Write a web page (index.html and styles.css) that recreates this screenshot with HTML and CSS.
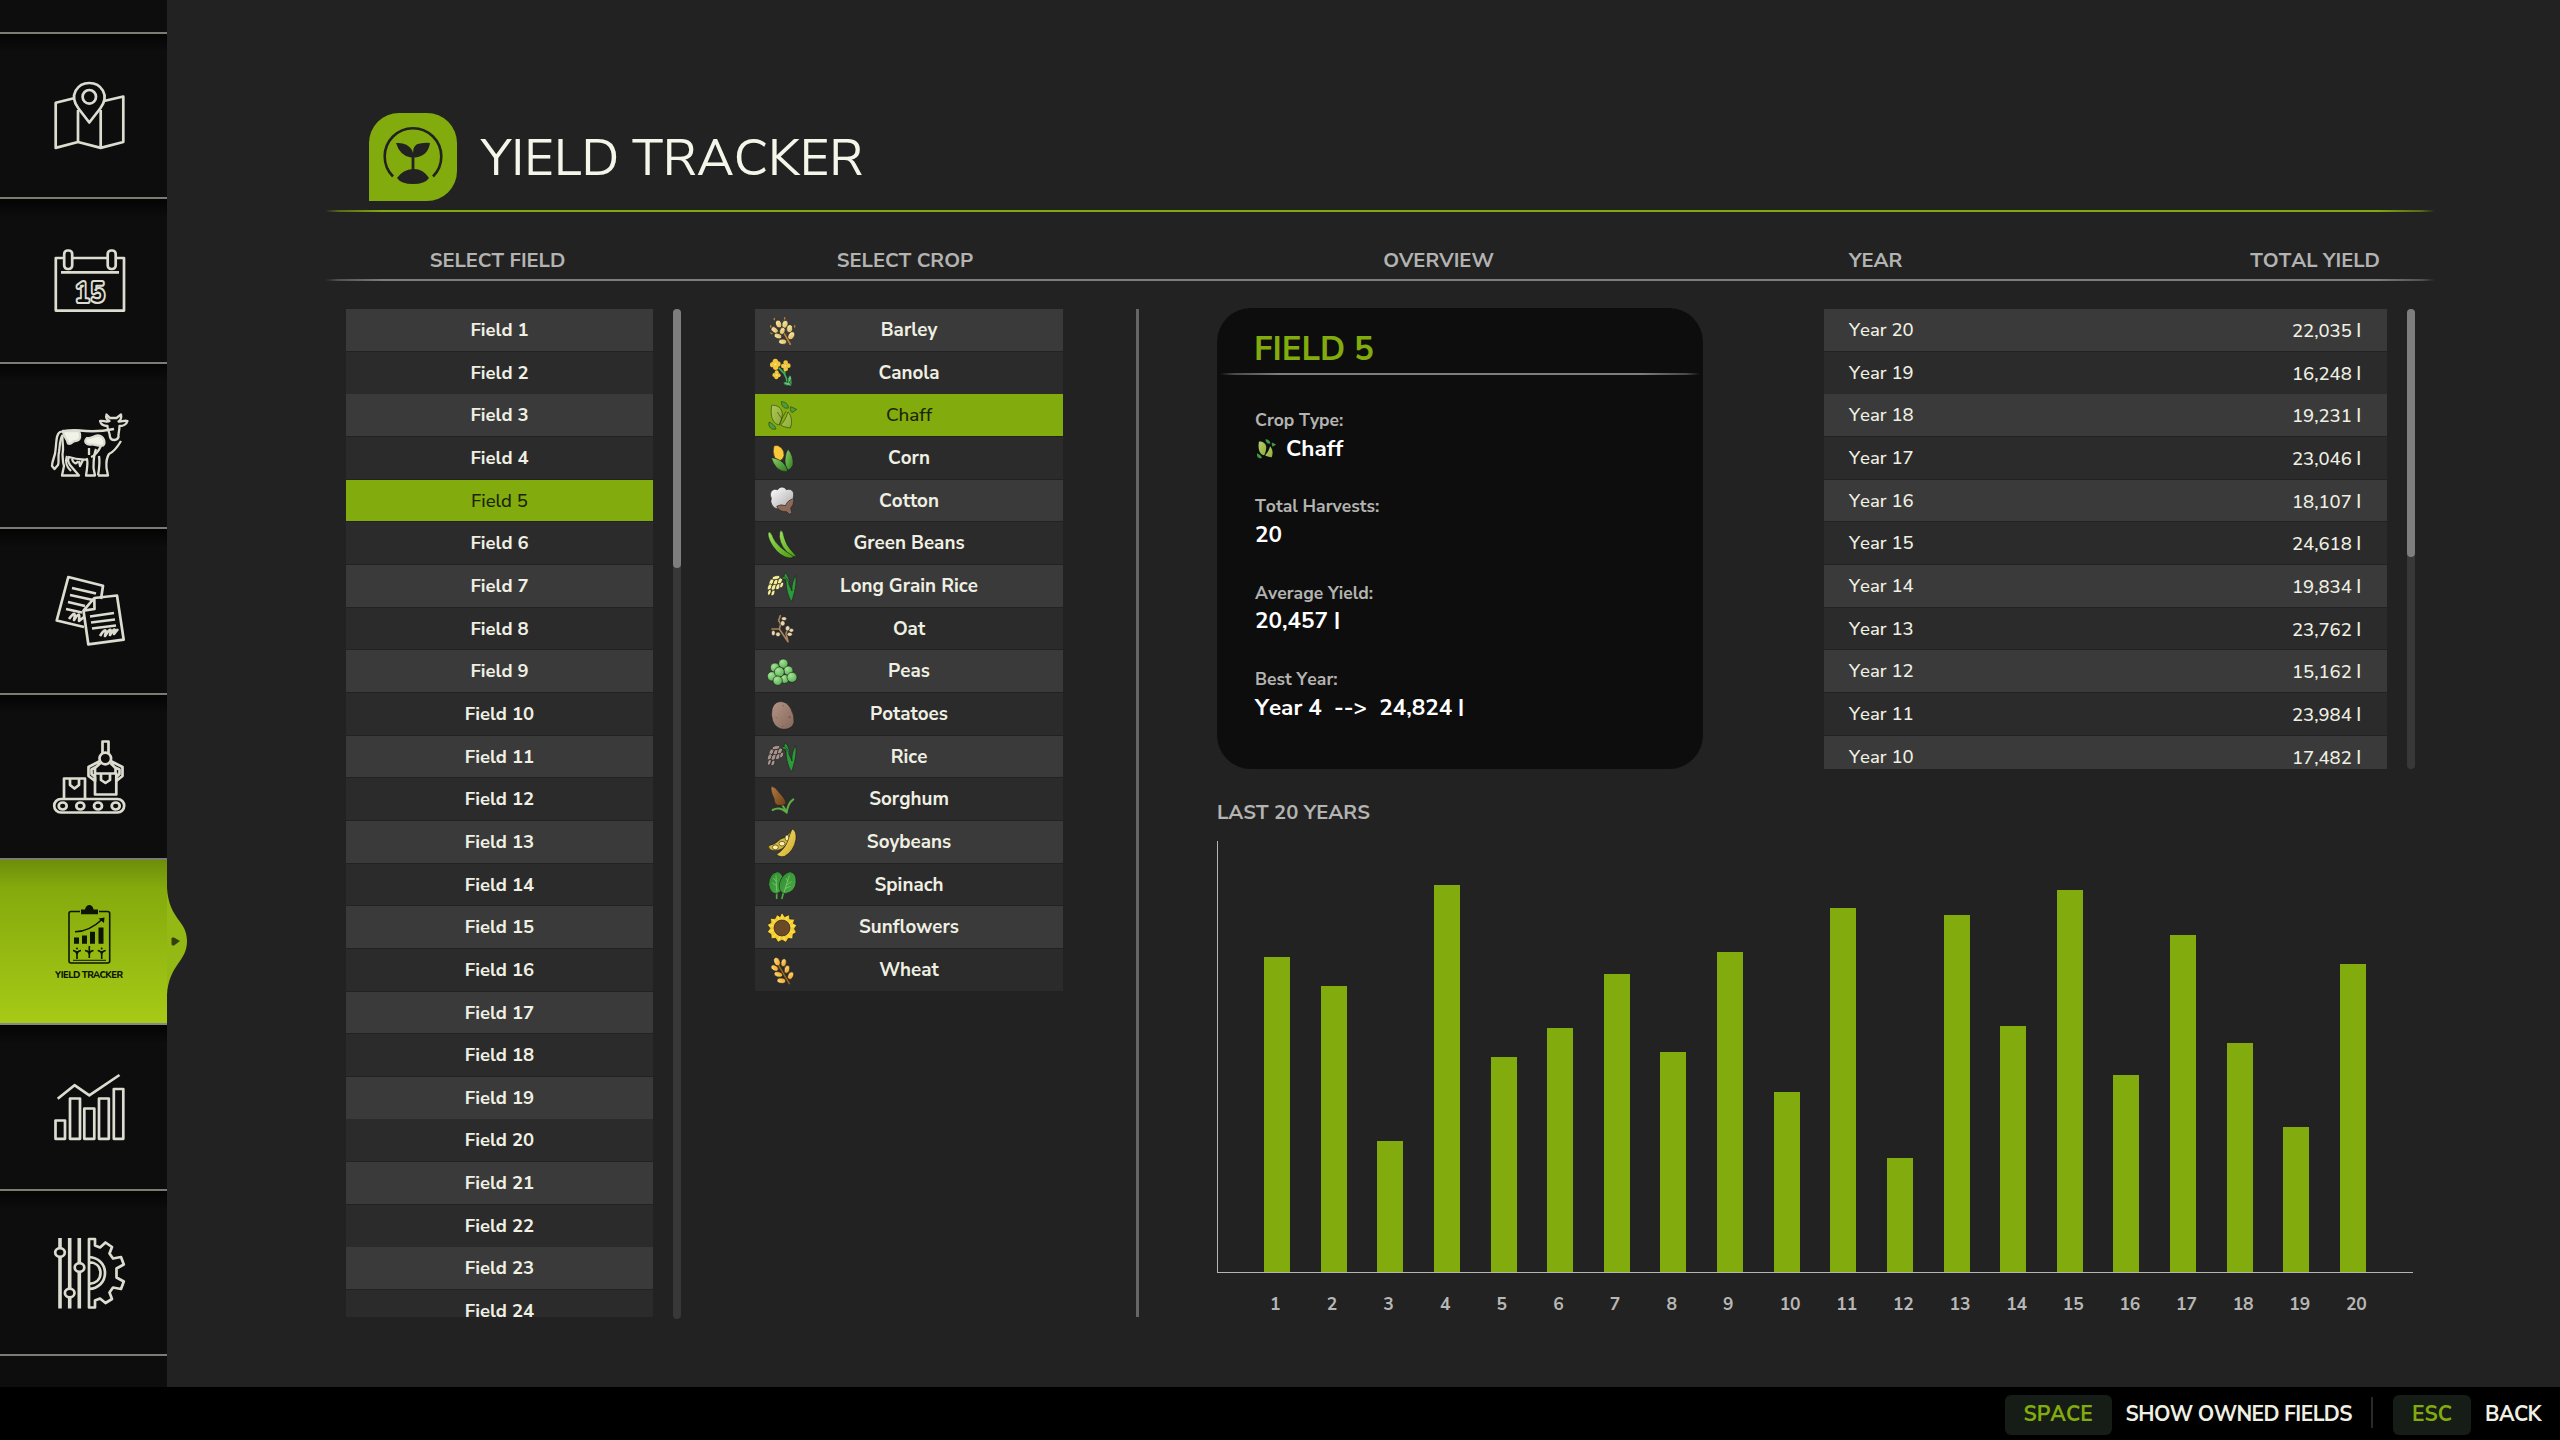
FILE: index.html
```html
<!DOCTYPE html>
<html lang="en">
<head>
<meta charset="utf-8">
<title>Yield Tracker</title>
<link rel="stylesheet" href="styles.css">
</head>
<body>
<svg class="defs" width="0" height="0">
  <defs>
    <linearGradient id="gBarley" x1="0" y1="0" x2="1" y2="1"><stop offset="0" stop-color="#fff3b8"/><stop offset="1" stop-color="#d9b25a"/></linearGradient>
    <linearGradient id="gWheat" x1="0" y1="0" x2="1" y2="1"><stop offset="0" stop-color="#ffe68a"/><stop offset="1" stop-color="#f0981a"/></linearGradient>
    <linearGradient id="gLeaf" x1="0" y1="0" x2="1" y2="1"><stop offset="0" stop-color="#8fd06a"/><stop offset="1" stop-color="#2c7a1f"/></linearGradient>
    <linearGradient id="gBean" x1="0" y1="0" x2="1" y2="1"><stop offset="0" stop-color="#9be05a"/><stop offset="1" stop-color="#4d9a14"/></linearGradient>
    <linearGradient id="gChaff" x1="0" y1="0" x2="1" y2="1"><stop offset="0" stop-color="#b9cf6a"/><stop offset="1" stop-color="#8fae3c"/></linearGradient>
    <linearGradient id="gPotato" x1="0" y1="0" x2="1" y2="1"><stop offset="0" stop-color="#b59587"/><stop offset="1" stop-color="#83675a"/></linearGradient>
    <linearGradient id="gSoy" x1="0" y1="0" x2="1" y2="1"><stop offset="0" stop-color="#f8e86a"/><stop offset="1" stop-color="#cfa62c"/></linearGradient>
    <linearGradient id="gCotton" x1="0" y1="0" x2="1" y2="1"><stop offset="0" stop-color="#ffffff"/><stop offset="1" stop-color="#a9a9a9"/></linearGradient>
    <linearGradient id="gSorghum" x1="0" y1="0" x2="1" y2="1"><stop offset="0" stop-color="#b07a45"/><stop offset="1" stop-color="#6f4014"/></linearGradient>
    <linearGradient id="gSpinach" x1="0" y1="0" x2="1" y2="1"><stop offset="0" stop-color="#2f8a30"/><stop offset="1" stop-color="#4cae45"/></linearGradient>
    <radialGradient id="gPea" cx=".35" cy=".3" r=".8"><stop offset="0" stop-color="#a8e39a"/><stop offset="1" stop-color="#4fae49"/></radialGradient>
    <symbol id="chaff" viewBox="0 0 96 96">
      <path d="M17 16C34 14 49 25 49 42C48 56 45 66 40 75C24 73 11 56 17 16Z" fill="url(#gChaff)"/>
      <path d="M66 36C77 48 80 66 73 84C61 83 50 79 44 75C54 66 61 53 66 36Z" fill="url(#gChaff)"/>
      <path d="M46 5C58 5 67 12 67 24C56 27 46 20 46 5Z" fill="#3f9a44"/>
      <path d="M74 20L92 28L78 38C73 33 72 26 74 20Z" fill="#3f9a44"/>
      <path d="M9 66C20 71 28 78 30 87C17 91 6 82 9 66Z" fill="#3f9a44"/>
      <path d="M34 36L47 56L60 34M47 56L40 73" fill="none"/>
    </symbol>
    <symbol id="rice" viewBox="0 0 96 96">
      <g fill="currentColor">
        <ellipse cx="30" cy="20" rx="12" ry="6" transform="rotate(-12 30 20)"/><ellipse cx="16" cy="33" rx="6" ry="10" transform="rotate(28 16 33)"/>
        <ellipse cx="29" cy="34" rx="6" ry="10" transform="rotate(28 29 34)"/><ellipse cx="42" cy="30" rx="6" ry="10" transform="rotate(28 42 30)"/>
        <ellipse cx="11" cy="48" rx="6" ry="10" transform="rotate(22 11 48)"/><ellipse cx="23" cy="49" rx="6" ry="10" transform="rotate(28 23 49)"/>
        <ellipse cx="36" cy="47" rx="6" ry="10" transform="rotate(28 36 47)"/><ellipse cx="47" cy="42" rx="5" ry="9" transform="rotate(22 47 42)"/>
        <ellipse cx="10" cy="64" rx="5" ry="9" transform="rotate(18 10 64)"/><ellipse cx="21" cy="66" rx="5" ry="9" transform="rotate(22 21 66)"/>
      </g>
      <path d="M46 16C58 14 66 24 69 40L78 60C76 44 82 24 89 14C93 40 85 66 77 92C66 78 60 52 60 26L46 22C58 14 54 12 58 5C66 14 70 24 72 40" fill="#2d9a3a"/>
    </symbol>
  </defs>
</svg>

<div class="screen">
  <nav class="sidebar">
    <div class="tab tab-edge"></div>
    <a class="tab"><svg class="tab-icon" viewBox="0 0 167 165"><path d="M75 64L55.7 68.8V113.9L78 108L100.7 113.9L123.3 108V62.5L104 67"/><path d="M78 76V108M100.7 76V113.9"/><path d="M89.3 88.5L78.5 74.5C68 61 78 49 89.3 49S110.600 61 100.200 74.500Z"/><ellipse cx="89.300" cy="62.800" rx="6.700" ry="6.800"/></svg></a>
    <a class="tab"><svg class="tab-icon" viewBox="0 0 167 165"><path d="M64 59H55.800V111.600H124V59H116.500M72.500 59H107"/><path d="M61 73.400H119"/><rect x="64.200" y="51.500" width="8" height="18.500" rx="3.500"/><rect x="107.700" y="51.500" width="8" height="18.500" rx="3.500"/><text class="tab-day" x="90" y="103.500" text-anchor="middle" textLength="31" lengthAdjust="spacingAndGlyphs">15</text></svg></a>
    <a class="tab"><svg class="tab-icon cow" viewBox="0 0 167 165"><path d="M114 65C104 67 92 68 80 66.500C70 65.500 64 67 60 68C56 70 56.500 78 55.500 86C55.500 92 52 96 52 102L54.500 105L58 101C59.500 97 57.500 94 59 88C60 82 59.500 76 62.500 71"/><path d="M62.500 71C62 78 64 84 62.500 90C63 96 62.500 98 64 102L62 111.500H79L70 101C68 98 67 96 69 93C80 96 86 96 87 95C88 99 87.500 103 86 111.500H95L93.500 104C93.500 98 94 90 96 85"/><path d="M67 92C65 97 66.500 103 71 107M72 95C73 99 76 101 78 97M79 97L80 102L83 96"/><path d="M98 111.500H108L106.500 104C106 98 107 93 109 90C114 88 118 82 121 77M99 92C100 98 99.500 103 98 111.500M89 84V91M101 82C98 88 94 92 91 93"/><path d="M100 57C106 56 106 59 109.500 57C106 55 106 52 106.500 50.500L110 54H116.500L121 50.500C121.500 53 121 56 118.500 57.500C122 58 124 56 127.500 57C126 62 122 62 119.500 62C119.500 67 118 70 118.500 73C117 77 111 77 110 73C110 68 107 66 107.500 62C104 62 101 61 100 57Z"/><path class="patch" d="M63 67L79 67C81 71 81 77 75 77C72 77 72 81 68 79.500C67 74 63 73 63 67ZM87 74C91 75 93 72 98 71.500C104 72 106 79 103 81.500C99 83 95 80 91 80.500C87 81 83 78 87 74Z"/></svg></a>
    <a class="tab"><svg class="tab-icon" viewBox="0 0 167 165"><path d="M101 70L103 56.700L68.300 48L56.700 91.500L84 98"/><path d="M94.300 69L117 66.500L123.700 110.700L88.300 115.300L83.500 81.700Z"/><path d="M83.500 81.700L94.500 80L94.300 69M72 59L96 64.500M70 66L93 71M68 73L85 77M66 80L82 83.500"/><path d="M69 90C74 83 76 83 74 91C79 83 80 84 79 92L84 88"/><path d="M90 87.500L114 84M91 93.500L115 90.500M92 99.500L116 96.500"/><path d="M100 107C105 99 107 100 105 107C110 99 112 99 110 106C114 99 116 99 114 105L118 100"/></svg></a>
    <a class="tab"><svg class="tab-icon" viewBox="0 0 167 165"><rect x="54.200" y="104" width="70" height="13.500" rx="6.700"/><ellipse cx="62.700" cy="111" rx="4" ry="3.500"/><ellipse cx="80.300" cy="111" rx="4" ry="3.500"/><ellipse cx="98" cy="111" rx="4" ry="3.500"/><ellipse cx="115.700" cy="111" rx="4" ry="3.500"/><path d="M64 104V83.500H85V104M70 84V90L74.500 93.500L79 90V84"/><rect x="95" y="78.500" width="21.300" height="21"/><path d="M101 79V85L105.500 88L110 85V79M102.500 58V46.500H108.500V58"/><circle cx="105.300" cy="63.500" r="5.800"/><path d="M100 66L88.500 72V81L95 86V82L91.500 79V74.500L96 72M110.700 66L122.500 72V81L116.300 86V82L119.500 79V74.500L114 72M100.500 68L95 73V78M110.500 68L115.500 73V78"/></svg></a>
    <a class="tab tab-active">
      <svg class="tab-icon clipboard" viewBox="0 0 167 165"><path d="M80 51.500H71Q69 51.500 69 53.500V101Q69 103 71 103H107.500Q109.700 103 109.700 101V53.500Q109.700 51.500 107.500 51.500H99"/><path class="ink" d="M81 54.300V49.500H85Q86 45 89.300 45T93.600 49.500H98V54.300ZM74 83.700V77.500H79V83.700ZM82 83.700V75.500H87V83.700ZM90 83.700V71.700H95V83.700ZM98.500 83.700V67.500H103.500V83.700ZM104.500 57.500L104 63L98.500 58.500Z"/><path d="M75 71.800C86 71.800 94 67 102 59.500"/><path d="M77 99V91M73 90.500Q77 91 77 95Q77 91 81 90.500M89.300 98V88M85 90.500Q89.300 91 89.300 95Q89.300 91 93.500 90.500M101.700 99V91M97.700 90.500Q101.700 91 101.700 95Q101.700 91 105.700 90.500"/><path class="soil" d="M73 100.300H106"/><circle class="ink" cx="77" cy="88.500" r="1"/><circle class="ink" cx="89.300" cy="87" r="1"/><circle class="ink" cx="101.700" cy="88.500" r="1"/><text class="tab-caption" x="55" y="117.800" textLength="68" lengthAdjust="spacing">YIELD TRACKER</text></svg>
      <svg class="tab-bump" viewBox="0 0 20 107"><path d="M0 0C2 32 20 32 20 53S2 76 0 107Z"/><path class="bump-arrow" d="M4.500 50.500Q4.500 49 7 49.500L13 53L7 57.500Q4.500 58 4.500 56Z"/></svg>
    </a>
    <a class="tab"><svg class="tab-icon" viewBox="0 0 167 165"><path d="M55.500 95.500H65V113.800H55.500ZM70 73.500H80V113.800H70ZM84.300 83.500H94.300V113.800H84.300ZM99 73.500H108.800V113.800H99ZM113.800 64H123.300V113.800H113.800ZM57.700 73.800L74.500 60.200L89.300 70.400L119.500 50"/></svg></a>
    <a class="tab"><svg class="tab-icon" viewBox="0 0 167 165"><path class="thick" d="M60 47V57M60 66V117.500M69.700 47V97.500M69.700 107V117.500M79.300 47V72M79.300 81V117.500"/><ellipse cx="60" cy="61.500" rx="4.800" ry="4.300"/><ellipse cx="69.700" cy="102" rx="4.800" ry="4.300"/><ellipse cx="79.500" cy="76.500" rx="4.800" ry="4.300"/><path d="M89 48H95V54.500L100 56.500L105.500 51.500L112 56L109.500 62.500L113 67.500L121 66L123.800 73.500L116.500 77.500V86.500L123.800 90.500L121 98L113 96.500L109.500 101.500L112 108L105.500 112L100 107.500L95 109.500V116.500H89ZM89 66C98 66.500 105 73 105 82S98 97.500 89 98M89 71C95 71.500 100.500 75 100.500 82S95 92.500 89 93"/></svg></a>
    <div class="tab tab-edge"></div>
  </nav>

  <main class="page">
    <header class="page-header">
      <svg class="page-badge" viewBox="0 0 88 88"><path d="M30 0H58A30 30 0 0 1 88 30V58A30 30 0 0 1 58 88H0V30A30 30 0 0 1 30 0Z" fill="#82ab0d"/><path d="M24 63.500A28.300 28.300 0 1 1 64 63.500" fill="none" stroke="#222" stroke-width="2.600"/><path d="M44 44V58" stroke="#222" stroke-width="2.800"/><path d="M27 30Q38 29 43 37Q44 40 44 40Q44 31 51 30.500Q56 29.500 61 30Q59 43 46 44.500H42Q31 43 27 30ZM28 65Q34 56.500 44 56T60 65Q56 71 44 71T28 65Z" fill="#222"/></svg>
      <h1 class="page-title">YIELD TRACKER</h1>
    </header>
    <div class="rule rule-green"></div>
    <div class="column-heads">
      <span class="head-fields">SELECT FIELD</span><span class="head-crops">SELECT CROP</span><span class="head-overview">OVERVIEW</span><span class="head-year">YEAR</span><span class="head-total">TOTAL YIELD</span>
    </div>
    <div class="rule"></div>

    <div class="content">
      <section class="scroller">
        <ul class="list field-list">
          <li>Field 1</li><li>Field 2</li><li>Field 3</li><li>Field 4</li><li class="selected">Field 5</li><li>Field 6</li><li>Field 7</li><li>Field 8</li><li>Field 9</li><li>Field 10</li><li>Field 11</li><li>Field 12</li><li>Field 13</li><li>Field 14</li><li>Field 15</li><li>Field 16</li><li>Field 17</li><li>Field 18</li><li>Field 19</li><li>Field 20</li><li>Field 21</li><li>Field 22</li><li>Field 23</li><li>Field 24</li>
        </ul>
        <div class="scrollbar"><div class="thumb thumb-fields"></div></div>
      </section>

      <ul class="list crop-list">
        <li><svg class="crop" viewBox="0 0 96 96"><path class="line" d="M43 34L73 88M25 14V10M56 12V8M14 36V32M18 56L14 54M86 36V32" stroke="#b9812e" stroke-width="4"/><g fill="url(#gBarley)"><ellipse cx="38" cy="27" rx="9" ry="12" transform="rotate(-20 38 27)"/><ellipse cx="57" cy="28" rx="9" ry="12" transform="rotate(15 57 28)"/><ellipse cx="26" cy="45" rx="8" ry="12" transform="rotate(-50 26 45)"/><ellipse cx="49" cy="48" rx="8" ry="11" transform="rotate(20 49 48)"/><ellipse cx="71" cy="41" rx="9" ry="12" transform="rotate(10 71 41)"/><ellipse cx="36" cy="63" rx="8" ry="12" transform="rotate(-70 36 63)"/><ellipse cx="76" cy="62" rx="9" ry="13" transform="rotate(30 76 62)"/><ellipse cx="50" cy="80" rx="8" ry="12" transform="rotate(-85 50 80)"/></g><path class="line" d="M56 58L73 88" stroke="#b9812e" stroke-width="4"/></svg><span>Barley</span></li>
        <li><svg class="crop" viewBox="0 0 96 96"><path class="line" d="M40 34L55 50L62 66V84M56 36V50M74 66V82" stroke="#3faf5d" stroke-width="5"/><path d="M72 54Q82 64 70 76L78 88L60 84Q50 82 54 74L66 76Q62 64 72 54Z" fill="#5bc873"/><g fill="#f2c73c" stroke="none"><circle cx="28" cy="13" r="8"/><circle cx="20" cy="23" r="8"/><circle cx="36" cy="21" r="8"/><circle cx="29" cy="31" r="8"/><circle cx="59" cy="17" r="7"/><circle cx="52" cy="27" r="7"/><circle cx="67" cy="26" r="7"/><circle cx="59" cy="36" r="7"/><circle cx="32" cy="46" r="6"/><circle cx="25" cy="54" r="6"/><circle cx="38" cy="55" r="6"/><circle cx="31" cy="61" r="6"/></g><g fill="#fbe58c" stroke="none"><circle cx="28" cy="22" r="3"/><circle cx="59" cy="27" r="3"/><circle cx="32" cy="54" r="3"/></g></svg><span>Canola</span></li>
        <li class="selected"><svg class="crop crop-faded"><use href="#chaff"/></svg><span>Chaff</span></li>
        <li><svg class="crop" viewBox="0 0 96 96"><path d="M24 8Q34 4 46 14Q56 24 54 38Q52 50 40 54L26 44Q18 26 24 8Z" fill="#fbc83a"/><path d="M66 18Q84 40 81 66Q76 78 66 82Q54 66 58 42Q60 28 66 18Z" fill="url(#gLeaf)"/><path d="M16 44Q38 46 52 60Q64 72 66 86Q46 88 32 74Q20 60 16 44Z" fill="url(#gLeaf)"/></svg><span>Corn</span></li>
        <li><svg class="crop" viewBox="0 0 96 96"><path d="M48 6Q57 6 61 14Q76 10 82 22Q84 30 82 36Q84 44 80 52L38 72Q24 72 18 60Q12 50 16 40Q10 30 16 18Q24 10 35 14Q40 6 48 6Z" fill="url(#gCotton)"/><path d="M84 40Q84 60 74 70L78 84L70 88L62 80Q40 82 32 64Q44 56 58 62Q64 46 84 40Z" fill="#8d6a58"/></svg><span>Cotton</span></li>
        <li><svg class="crop" viewBox="0 0 96 96"><path d="M44 6Q52 10 54 26Q60 52 80 72L92 86L76 84Q44 60 40 26Q40 12 44 6Z" fill="url(#gBean)"/><path d="M10 12Q18 16 22 30Q34 56 78 82Q88 90 70 90Q42 86 20 54Q6 32 6 18Q6 12 10 12Z" fill="url(#gBean)"/></svg><span>Green Beans</span></li>
        <li><svg class="crop rice-long"><use href="#rice"/></svg><span>Long Grain Rice</span></li>
        <li><svg class="crop" viewBox="0 0 96 96"><path class="line" d="M43 8L38 22L44 34L40 48L66 86M40 48L18 48M66 86L60 62L66 42" stroke="#a8845c" stroke-width="5"/><g fill="#e8d5ae"><ellipse cx="54" cy="17" rx="8" ry="6"/><ellipse cx="50" cy="31" rx="7" ry="8"/><ellipse cx="65" cy="46" rx="7" ry="8"/><ellipse cx="76" cy="52" rx="7" ry="6"/><ellipse cx="22" cy="60" rx="6" ry="8"/><ellipse cx="36" cy="64" rx="7" ry="7"/><ellipse cx="71" cy="64" rx="8" ry="6"/></g></svg><span>Oat</span></li>
        <li><svg class="crop" viewBox="0 0 96 96"><g fill="url(#gPea)"><circle cx="27" cy="35" r="14"/><circle cx="52" cy="23" r="14"/><circle cx="67" cy="44" r="14"/><circle cx="18" cy="61" r="14"/><circle cx="56" cy="69" r="13"/><circle cx="40" cy="48" r="15"/><circle cx="78" cy="64" r="15"/><circle cx="35" cy="74" r="14"/></g></svg><span>Peas</span></li>
        <li><svg class="crop" viewBox="0 0 96 96"><path d="M40 8Q62 6 74 28Q86 50 84 70Q80 90 54 91Q30 90 20 66Q14 48 18 30Q24 10 40 8Z" fill="url(#gPotato)"/><path class="speck" d="M50 18L54 22M29 54L32 57M66 56L72 52M48 82L52 82M74 53L72 58"/></svg><span>Potatoes</span></li>
        <li><svg class="crop rice-brown"><use href="#rice"/></svg><span>Rice</span></li>
        <li><svg class="crop" viewBox="0 0 96 96"><path class="line" d="M42 52L62 84M82 46Q66 56 62 86Q42 66 20 78" stroke="#5fae45" stroke-width="6"/><path d="M16 6Q28 8 40 26Q60 46 60 58Q56 66 34 64Q24 58 24 44Q12 20 16 6Z" fill="url(#gSorghum)"/></svg><span>Sorghum</span></li>
        <li><svg class="crop" viewBox="0 0 96 96"><path d="M76 8Q66 30 44 36Q26 54 8 56Q6 66 18 70Q50 76 68 42Z" fill="#d9bb38"/><g fill="#fff0a0"><ellipse cx="28" cy="61" rx="9" ry="7"/><ellipse cx="48" cy="50" rx="9" ry="7"/><ellipse cx="63" cy="33" rx="6" ry="9"/></g><path d="M78 6Q92 10 90 36Q84 72 56 88Q40 92 32 82Q56 68 66 40Q72 20 78 6Z" fill="url(#gSoy)"/></svg><span>Soybeans</span></li>
        <li><svg class="crop" viewBox="0 0 96 96"><path class="line" d="M32 62V88M52 72L48 88" stroke="#4cae45" stroke-width="5"/><path d="M34 8Q50 12 54 36Q54 66 32 74Q12 74 8 46Q10 14 34 8Z" fill="url(#gSpinach)"/><path d="M72 8Q92 12 90 40Q88 68 58 74Q36 70 40 44Q48 14 72 8Z" fill="url(#gSpinach)"/><path class="line" d="M30 20L32 66M30 36L22 28M31 50L20 42M70 20L54 70M66 36L60 28M62 48L76 38M58 58L72 52" stroke="#8ed57c" stroke-width="2"/></svg><span>Spinach</span></li>
        <li><svg class="crop" viewBox="0 0 96 96"><path d="M48 2L56 14L70 8L71 21L86 22L82 34L92 40L85 50L91 61L81 67L80 81L67 79L60 91L48 84L36 91L29 79L16 80L15 67L4 60L12 49L4 38L15 32L13 19L27 20L33 8L42 14Z" fill="#f7cf2c"/><path d="M48 6V24M64 14L58 26M80 26L68 34M88 41L72 44M84 62L70 56M74 76L64 66M56 84L52 72M38 84L42 72M22 74L32 64M10 58L26 54M10 40L26 42M20 24L32 34M36 14L40 26" stroke="#fff0a0"/><circle cx="48" cy="48" r="24" fill="#6b4a2a"/></svg><span>Sunflowers</span></li>
        <li><svg class="crop" viewBox="0 0 96 96"><path class="line" d="M36 28L70 86" stroke="#9a651a" stroke-width="4.500"/><g fill="url(#gWheat)"><ellipse cx="33" cy="20" rx="9" ry="13" transform="rotate(-20 33 20)"/><ellipse cx="53" cy="23" rx="8" ry="12" transform="rotate(10 53 23)"/><ellipse cx="26" cy="39" rx="8" ry="12" transform="rotate(-60 26 39)"/><ellipse cx="63" cy="43" rx="8" ry="12" transform="rotate(15 63 43)"/><ellipse cx="37" cy="58" rx="8" ry="13" transform="rotate(-75 37 58)"/><ellipse cx="74" cy="62" rx="8" ry="12" transform="rotate(25 74 62)"/><ellipse cx="46" cy="77" rx="8" ry="13" transform="rotate(-85 46 77)"/></g></svg><span>Wheat</span></li>
      </ul>

      <div class="divider"></div>

      <section class="details">
        <div class="details-top">
          <article class="card">
            <h2 class="card-title">FIELD 5</h2>
            <div class="rule rule-card"></div>
            <dl class="facts">
              <div><dt>Crop Type:</dt><dd><svg class="fact-crop"><use href="#chaff"/></svg>Chaff</dd></div>
              <div><dt>Total Harvests:</dt><dd>20</dd></div>
              <div><dt>Average Yield:</dt><dd>20,457 <i>l</i></dd></div>
              <div><dt>Best Year:</dt><dd>Year 4&nbsp; --&gt;&nbsp; 24,824 <i>l</i></dd></div>
            </dl>
          </article>
          <div class="scroller">
            <ul class="list year-list">
              <li><span>Year 20</span><span>22,035 <i>l</i></span></li>
              <li><span>Year 19</span><span>16,248 <i>l</i></span></li>
              <li><span>Year 18</span><span>19,231 <i>l</i></span></li>
              <li><span>Year 17</span><span>23,046 <i>l</i></span></li>
              <li><span>Year 16</span><span>18,107 <i>l</i></span></li>
              <li><span>Year 15</span><span>24,618 <i>l</i></span></li>
              <li><span>Year 14</span><span>19,834 <i>l</i></span></li>
              <li><span>Year 13</span><span>23,762 <i>l</i></span></li>
              <li><span>Year 12</span><span>15,162 <i>l</i></span></li>
              <li><span>Year 11</span><span>23,984 <i>l</i></span></li>
              <li><span>Year 10</span><span>17,482 <i>l</i></span></li>
            </ul>
            <div class="scrollbar"><div class="thumb thumb-years"></div></div>
          </div>
        </div>

        <h3 class="chart-title">LAST 20 YEARS</h3>
        <div class="plot">
          <div class="bar" style="height:315px"></div><div class="bar" style="height:286px"></div><div class="bar" style="height:131px"></div><div class="bar" style="height:387px"></div><div class="bar" style="height:215px"></div><div class="bar" style="height:244px"></div><div class="bar" style="height:298px"></div><div class="bar" style="height:220px"></div><div class="bar" style="height:320px"></div><div class="bar" style="height:180px"></div><div class="bar" style="height:364px"></div><div class="bar" style="height:114px"></div><div class="bar" style="height:357px"></div><div class="bar" style="height:246px"></div><div class="bar" style="height:382px"></div><div class="bar" style="height:197px"></div><div class="bar" style="height:337px"></div><div class="bar" style="height:229px"></div><div class="bar" style="height:145px"></div><div class="bar" style="height:308px"></div>
        </div>
        <div class="ticks"><span>1</span><span>2</span><span>3</span><span>4</span><span>5</span><span>6</span><span>7</span><span>8</span><span>9</span><span>10</span><span>11</span><span>12</span><span>13</span><span>14</span><span>15</span><span>16</span><span>17</span><span>18</span><span>19</span><span>20</span></div>
      </section>
    </div>
  </main>
</div>

<footer class="actions">
  <kbd class="key key-space">SPACE</kbd><span class="action">SHOW OWNED FIELDS</span>
  <span class="separator"></span>
  <kbd class="key key-esc">ESC</kbd><span class="action">BACK</span>
</footer>
</body>
</html>
```
FILE: styles.css
```css
* { box-sizing: border-box; }

body {
  margin: 0;
  width: 2560px;
  height: 1440px;
  overflow: hidden;
  display: flex;
  flex-direction: column;
  background: #222;
  color: #eff0e3;
  font-family: "Nunito Sans", Nunito, Lato, "Open Sans", sans-serif;
  font-kerning: none;
}

h1, h2, h3, ul, dl, dd { margin: 0; padding: 0; }

/* Litre unit: a plain straight stroke */
i { font-style: normal; font-family: Lato, sans-serif; }

.defs { position: absolute; }

.screen { display: flex; height: 1387px; }

/* Sidebar */
.sidebar {
  width: 167px;
  flex: none;
  display: flex;
  flex-direction: column;
  overflow: visible;
}
.tab {
  height: 165.33px;
  flex: none;
  border-bottom: 2px solid #7b7d73;
  background: linear-gradient(#040404, #0d0d0d 18px);
}
.tab-edge { height: 33.5px; background: #0d0d0d; }
.tab-edge:last-child { height: 30.5px; border: 0; }
.tab-icon {
  display: block;
  width: 167px;
  height: 165px;
  fill: none;
  stroke: #dcddd0;
  stroke-width: 2.7;
  stroke-linejoin: round;
}
.thick { stroke-width: 3.6; }
.cow { stroke-width: 2.3; }
.patch { fill: #f2f3e8; }
.tab-day {
  font: 900 32px Nunito, "Open Sans", sans-serif;
  stroke-width: 2.2;
}
.tab-active {
  position: relative;
  background: linear-gradient(#6d8d0a, #84aa0d 28px, #a7ca16);
  border-color: #85878a;
}
.clipboard { stroke: #0e1403; stroke-width: 1.6; }
.soil { stroke-width: 1; }
.ink, .tab-caption { fill: #0e1403; stroke: none; }
.tab-caption { font: 800 9.5px Nunito, "Open Sans", sans-serif; }
.tab-bump {
  position: absolute;
  left: 167px;
  top: 28px;
  width: 20px;
  height: 107px;
  fill: #95b914;
}
.tab-bump .bump-arrow { fill: #33400c; }

/* Page */
.page {
  width: 2110px;
  margin-left: 158px;
  padding-top: 113px;
}
.page-header {
  display: flex;
  align-items: center;
  gap: 24px;
  height: 97px;
  padding: 0 0 9px 44px;
}
.page-badge { width: 88px; height: 88px; }
.page-title {
  padding-top: 3px;
  font-size: 50.8px;
  font-weight: 400;
  line-height: 86px;
  color: #f5f6ea;
}
.rule {
  height: 2px;
  background: linear-gradient(90deg, transparent, #7d7d7b88 14px, #7d7d7b 58px, #7d7d7b calc(100% - 58px), #7d7d7b88 calc(100% - 14px), transparent);
}
.rule-green { background: linear-gradient(90deg, transparent, #82ab0d88 14px, #82ab0d 58px, #82ab0d calc(100% - 58px), #82ab0d88 calc(100% - 14px), transparent); }

.column-heads {
  display: flex;
  height: 67px;
  padding-top: 30px;
  font-size: 20.2px;
  font-weight: 700;
  line-height: 38px;
  text-align: center;
  color: #b3b3b1;
}
.head-fields { width: 345px; }
.head-crops { width: 470px; }
.head-overview { width: 597px; }
.head-year { margin-left: 112px; }
.head-total { flex: 1; padding-right: 55px; text-align: right; }

.content {
  display: flex;
  padding: 28px 0 0 21px;
}

/* Lists */
.scroller { display: flex; gap: 20px; }
.list {
  list-style: none;
  display: grid;
  grid-auto-rows: 41.87px;
  row-gap: 0.797px;
  overflow: hidden;
  font-size: 18.5px;
  font-weight: 700;
  line-height: 43.5px;
}
.list li { background: #2b2b2b; }
.list li:nth-child(odd) { background: #3a3a3a; }
.list li.selected {
  background: #82ab0d;
  color: #1c2408;
  font-weight: 500;
}
.field-list {
  width: 307px;
  height: 1008px;
  text-align: center;
}
.crop-list {
  width: 308px;
  height: 683px;
  margin-left: 74px;
  font-size: 18.8px;
}
.crop-list li {
  display: grid;
  grid-template-columns: 32px 1fr;
  align-items: center;
  padding: 0 11px;
  text-align: center;
}
.crop-list span { padding-right: 32px; }
.crop {
  width: 32px;
  height: 32px;
  stroke: #1d1d1d;
  stroke-width: 1.8;
  stroke-linejoin: round;
  fill: none;
}
.line { stroke-linecap: round; }
.crop-faded { opacity: 0.8; }
.rice-long { color: #f6f09a; }
.rice-brown { color: #a8948d; }
.speck { stroke: #5c463c; }

.scrollbar {
  width: 8px;
  border-radius: 4px;
  background: #383838;
}
.thumb {
  border-radius: 4px;
  background: #7e7e7e;
}
.thumb-fields { height: 259px; }
.thumb-years { height: 248px; }

.divider {
  width: 3px;
  height: 1008px;
  margin: 0 78px 0 73px;
  background: #666;
}

/* Details */
.details { width: 1198px; }
.details-top {
  display: flex;
  gap: 121px;
  height: 460px;
}
.card {
  width: 486px;
  height: 461px;
  margin-top: -1px;
  padding-top: 15px;
  border-radius: 34px;
  background: #0d0d0d;
}
.card-title {
  padding-left: 37px;
  font-size: 33px;
  font-weight: 700;
  line-height: 53px;
  height: 50px;
  color: #82ab0d;
}
.rule-card { margin: 0 3px 31px; }
.facts {
  display: grid;
  row-gap: 29.4px;
  padding-left: 38px;
}
.facts dt {
  font-size: 17.5px;
  font-weight: 700;
  line-height: 28px;
  color: #b3b3b1;
}
.facts dd {
  display: flex;
  align-items: center;
  height: 29px;
  font-size: 22.5px;
  font-weight: 700;
  line-height: 30px;
  color: #fff;
  white-space: pre;
}
.fact-crop {
  width: 22px;
  height: 22px;
  margin-right: 9px;
}

.year-list {
  width: 563px;
  height: 460px;
  font-weight: 500;
}
.year-list li {
  display: flex;
  justify-content: space-between;
  padding: 0 26px 0 25px;
}

.chart-title {
  margin-top: 31px;
  font-size: 20.2px;
  font-weight: 700;
  line-height: 26px;
  color: #b3b3b1;
}
.plot {
  display: flex;
  align-items: flex-end;
  gap: 30.63px;
  width: 1196px;
  height: 432px;
  margin-top: 15px;
  padding-left: 46px;
  border: solid #b5b5b3;
  border-width: 0 0 1px 1px;
}
.bar {
  width: 26px;
  flex: none;
  background: #82ab0d;
}
.ticks {
  display: flex;
  margin-top: 16px;
  padding-left: 53px;
  font-size: 17.5px;
  font-weight: 700;
  line-height: 30px;
  color: #b7b7b5;
}
.ticks span { width: 56.63px; flex: none; }

/* Footer */
.actions {
  display: flex;
  align-items: flex-start;
  justify-content: flex-end;
  height: 53px;
  padding: 8px 19px 0 0;
  background: #000;
  font-size: 21px;
  font-weight: 700;
  line-height: 39px;
}
.key {
  height: 40px;
  border-radius: 6px;
  background: #161c16;
  color: #82ab0d;
  font: inherit;
  text-align: center;
}
.key-space { width: 107px; }
.key-esc { width: 78px; }
.action { margin-left: 14px; letter-spacing: -0.57px; }
.separator {
  width: 2px;
  height: 31px;
  margin: 2px 20px 0 19px;
  background: #292929;
}
```
